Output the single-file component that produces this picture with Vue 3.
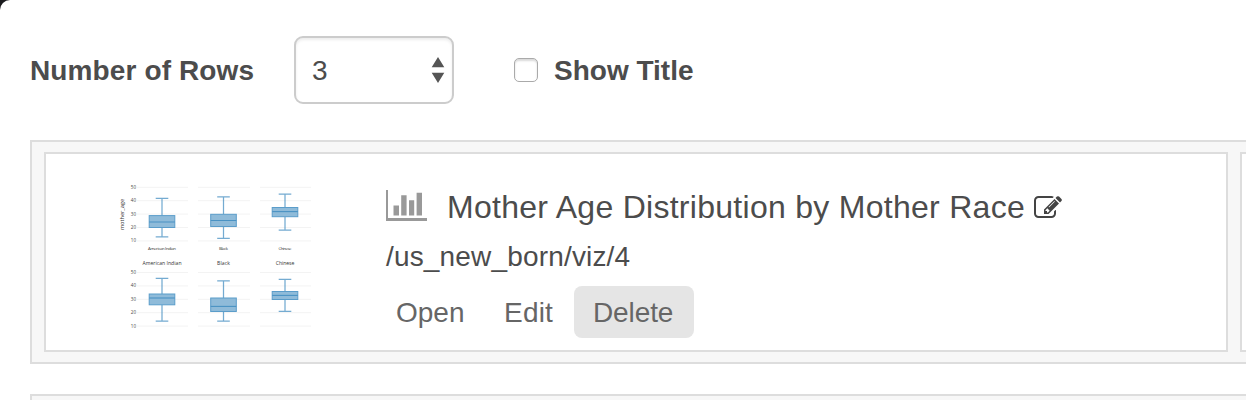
<script setup>
const ticks = [50, 40, 30, 20, 10]
const charts = [
  {
    top: 187.3, nameY: 249.6, nameSize: 4.3,
    boxes: [
      { name: 'American Indian', cx: 162, hi: 198.3, q3: 215.6, med: 222, q1: 227.5, lo: 236.8 },
      { name: 'Black', cx: 223.5, hi: 196.8, q3: 214.3, med: 220.5, q1: 226.5, lo: 238.3 },
      { name: 'Chinese', cx: 285, hi: 194, q3: 207.5, med: 211.6, q1: 216.7, lo: 230 },
    ],
  },
  {
    top: 272.5, nameY: 265, nameSize: 5.1,
    boxes: [
      { name: 'American Indian', cx: 162, hi: 278.3, q3: 294, med: 298, q1: 304.8, lo: 321 },
      { name: 'Black', cx: 223.5, hi: 280.8, q3: 298, med: 306.4, q1: 311.5, lo: 321 },
      { name: 'Chinese', cx: 285, hi: 279.4, q3: 291.5, med: 295.4, q1: 299.5, lo: 311.4 },
    ],
  },
]
const nameWidths = {
  'American Indian': [28, 39],
  Black: [9, 13],
  Chinese: [13, 18.5],
}
</script>

<template>
  <div class="backdrop">
    <main class="panel">
      <form class="options">
        <label class="rows-label">Number of Rows</label>
        <div class="select">
          <span>3</span>
          <svg width="14" height="26" viewBox="0 0 14 26"><path d="M7 0l6.3 10.3H.7zM7 26l6.3-10.3H.7z" fill="#555" /></svg>
        </div>
        <span class="checkbox"></span>
        <label class="title-label">Show Title</label>
      </form>

      <section class="row">
        <article class="card">
          <svg class="chart" width="210" height="157" viewBox="110 175 210 157">
            <g v-for="(chart, c) in charts" :key="chart.top">
              <g v-for="(tick, i) in ticks" :key="tick">
                <text class="tick" x="136" :y="chart.top + i * 13.4 + 1.5" text-anchor="end">{{ tick }}</text>
                <path class="grid" :d="`M137 ${chart.top + i * 13.4}h51m10 0h52m10 0h51`" />
              </g>
              <g v-for="b in chart.boxes" :key="b.name">
                <path
                  class="whisker"
                  :d="`M${b.cx - 6.3} ${b.hi}h12.6M${b.cx} ${b.hi}V${b.q3}M${b.cx} ${b.q1}V${b.lo}M${b.cx - 6.3} ${b.lo}h12.6`"
                />
                <rect class="box" :x="b.cx - 12.8" :y="b.q3" width="25.6" :height="b.q1 - b.q3" />
                <path class="median" :d="`M${b.cx - 12.8} ${b.med}h25.6`" />
                <text
                  class="name" :x="b.cx" :y="chart.nameY" text-anchor="middle"
                  :font-size="chart.nameSize" :textLength="nameWidths[b.name][c]"
                >{{ b.name }}</text>
              </g>
            </g>
            <text class="axis" transform="translate(124 214.5) rotate(-90)" text-anchor="middle">mother_age</text>
          </svg>
          <div class="details">
            <h2 class="title">
              <svg class="bars" width="41" height="31" viewBox="0 0 41 31">
                <path d="M0 0h2v29H0zM0 28h41v3H0zM7.5 15.5h5.5V25.5H7.5zM15.2 5.3h5.4v20.2h-5.4zM23 10.3h5.2v15.2H23zM30.6 2.7H36v22.8h-5.4z" fill="#999" />
              </svg>
              <span class="title-text">Mother Age Distribution by Mother Race</span>
              <svg class="pencil" width="28" height="28" viewBox="0 0 1792 1792">
                <path fill="#444" d="M888 1184l116-116-152-152-116 116v56h96v96h56zM1328 464q-16-16-33 1l-350 350q-17 17-1 33t33-1l350-350q17-17 1-33zM1408 1058v190q0 119-84.5 203.5t-203.5 84.5h-832q-119 0-203.5-84.5t-84.5-203.5v-832q0-119 84.5-203.5t203.5-84.5h832q63 0 117 25 15 7 18 23 3 17-9 29l-49 49q-14 14-32 8-23-6-45-6h-832q-66 0-113 47t-47 113v832q0 66 47 113t113 47h832q66 0 113-47t47-113v-126q0-13 9-22l64-64q15-15 35-7t20 29zM1312 320l288 288-672 672h-288v-288zM1756 452l-92 92-288-288 92-92q28-28 68-28t68 28l152 152q28 28 28 68t-28 68z" />
              </svg>
            </h2>
            <p class="path">/us_new_born/viz/4</p>
            <nav class="actions">
              <a class="open">Open</a>
              <a class="edit">Edit</a>
              <a class="delete">Delete</a>
            </nav>
          </div>
        </article>
        <article class="card"></article>
      </section>
      <section class="row"></section>
    </main>
  </div>
</template>

<style>
body { overflow: hidden; }
</style>

<style scoped>
.backdrop {
  height: 400px;
  overflow: hidden;
  background: #1b1b1e;
  font-family: "Liberation Sans", Arial, sans-serif;
  color: #4c4c4c;
}
.panel {
  box-sizing: border-box;
  height: 400px;
  padding: 36px 0 0 30px;
  border-radius: 10px 0 0 0;
  background: #fff;
  overflow: hidden;
}
.options {
  display: flex;
  align-items: center;
  height: 68px;
  margin-bottom: 36px;
  font-size: 28px;
}
label { padding-top: 2px; font-weight: bold; white-space: nowrap; }
.rows-label { width: 264px; letter-spacing: .12px; }
.title-label { margin-left: 16px; }
.select {
  box-sizing: border-box;
  display: flex;
  align-items: center;
  justify-content: space-between;
  width: 160px;
  height: 68px;
  padding: 0 7px 0 16px;
  border: 2px solid #ccc;
  border-radius: 9px;
  box-shadow: inset 0 2px 3px rgba(0, 0, 0, .075);
}
.select span { padding-top: 2px; }
.checkbox {
  box-sizing: border-box;
  width: 24px;
  height: 24px;
  margin-left: 60px;
  border: 1px solid #aaa;
  border-radius: 5px;
  box-shadow: inset 0 2px 2px rgba(0, 0, 0, .15);
}
.row {
  box-sizing: border-box;
  display: flex;
  gap: 12px;
  width: 2424px;
  height: 224px;
  margin-bottom: 30px;
  padding: 10px 12px;
  border: 2px solid #ddd;
  background: #f7f7f7;
}
.card {
  box-sizing: border-box;
  display: flex;
  flex: none;
  width: 1184px;
  height: 200px;
  padding: 21px 0 0 64px;
  border: 2px solid #ddd;
  background: #fff;
}
.chart { flex: none; }
.details { margin-left: 66px; padding-top: 10px; }
.title {
  display: flex;
  align-items: center;
  height: 44px;
  margin: 0;
  font-size: 32px;
  font-weight: normal;
  white-space: nowrap;
}
.bars { margin: 0 20px 4px 0; }
.title-text { width: 587px; letter-spacing: .28px; }
.pencil { margin-top: 2px; }
.path { margin: 10px 0 11px; font-size: 28px; line-height: 36px; letter-spacing: .17px; }
.actions { display: flex; font-size: 28px; line-height: 54px; color: #666; }
.actions a { box-sizing: border-box; height: 52px; }
.open { width: 118px; padding-left: 10px; }
.edit { width: 70px; letter-spacing: .2px; }
.delete { width: 120px; padding-left: 19px; border-radius: 8px; background: #e5e5e5; letter-spacing: -.1px; }
.tick { font: 4.5px "Open Sans", sans-serif; fill: #444; }
.name { font-family: "Open Sans", sans-serif; fill: #333; }
.axis { font: 5.6px "Open Sans", sans-serif; fill: #333; }
.grid { stroke: #f3f3f3; stroke-width: 1; }
.whisker { fill: none; stroke: #1f77b4; stroke-opacity: .62; stroke-width: 1.25; }
.box { fill: #8fbbd9; stroke: #5b9dca; stroke-width: 1; }
.median { stroke: #4a92c3; stroke-width: 1.1; }
</style>
